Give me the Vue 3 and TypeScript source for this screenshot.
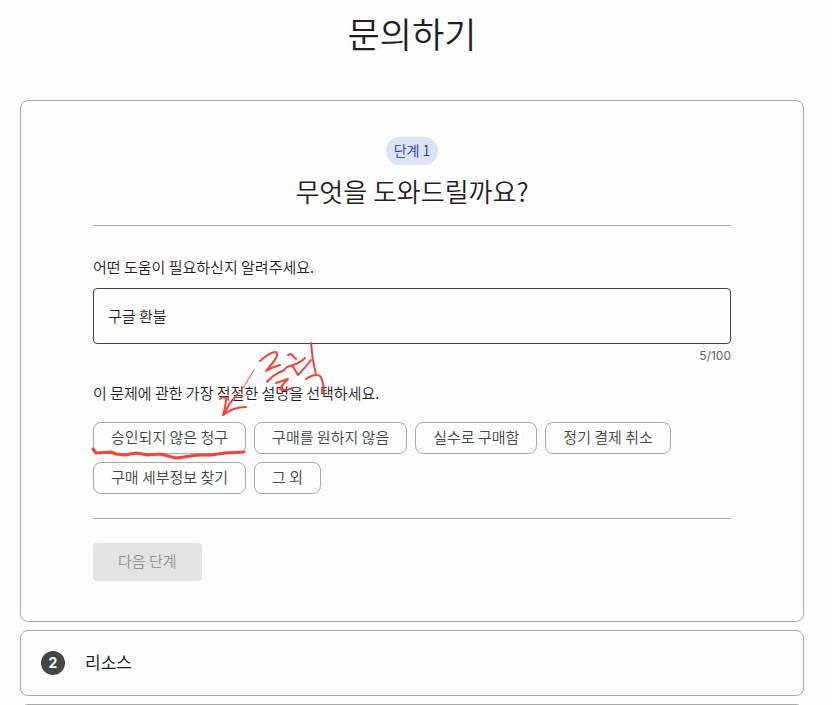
<script setup lang="ts">
import { computed, ref } from 'vue'

const query = ref('구글 환불')
const maxLength = 100
const counter = computed(() => `${query.value.length}/${maxLength}`)

const reasons: string[] = [
  '승인되지 않은 청구',
  '구매를 원하지 않음',
  '실수로 구매함',
  '정기 결제 취소',
  '구매 세부정보 찾기',
  '그 외',
]
const selected = ref<string | null>(null)
</script>

<template>
  <main class="page">
    <h1 class="title">문의하기</h1>

    <div class="steps">
      <section class="card step-open">
        <header class="step-header">
          <span class="badge">단계 1</span>
          <h2 class="step-title">무엇을 도와드릴까요?</h2>
        </header>

        <form class="form" @submit.prevent>
          <label class="label" for="query">어떤 도움이 필요하신지 알려주세요.</label>
          <input id="query" v-model="query" class="field" type="text" :maxlength="maxLength" />
          <p class="counter">{{ counter }}</p>

          <p id="reason-label" class="label reason-label">이 문제에 관한 가장 적절한 설명을 선택하세요.</p>
          <div class="chips" role="group" aria-labelledby="reason-label">
            <button
              v-for="reason in reasons"
              :key="reason"
              class="chip"
              type="button"
              :aria-pressed="selected === reason"
              @click="selected = reason"
            >
              {{ reason }}
            </button>
          </div>

          <div class="actions">
            <button class="next" type="submit" :disabled="selected === null">다음 단계</button>
          </div>
        </form>

        <svg class="ink" viewBox="0 0 250 130" width="250" height="130" aria-hidden="true">
          <path class="thin" d="M164 29 L153 47 L140 62" />
          <path d="M147 54 L140 62 L134 73" />
          <path d="M130 58 Q133 55 136 57 Q136 64 133 74 Q143 66 156 66" />
          <path d="M170 20 Q180 11 186 11 Q190 14 180 25 L176 30 Q182 26 190 24" />
          <path d="M177 41 Q185 32 193 30 L196 27" />
          <path d="M186 42 L198 38 Q192 44 190 48 Q194 51 202 47" />
          <path d="M198 14 L201 13 L206 18 M197 26 Q209 23 215 17 M202 24 L208 34 Q214 28 221 19" />
          <path d="M221 2 Q222 18 226 34 M216 38 Q225 32 230 35 Q234 40 234 54" />
          <path class="thick" d="M3 108 L6 112 L21 111 L26 113 L35 114 L46 112 L58 114 L70 113 L86 117 L108 114 L121 114 L135 112 L154 111" />
        </svg>
      </section>

      <section class="card step-closed">
        <span class="number">2</span>
        <h2 class="closed-title">리소스</h2>
      </section>

      <section class="card step-closed"></section>
    </div>
  </main>
</template>

<style>
body {
  margin: 0;
  background: #fdfdfd;
}
</style>

<style scoped>
.page {
  box-sizing: border-box;
  height: 100vh;
  overflow: hidden;
  padding: 8px 28px 0 20px;
  color: #1f1f1f;
  font-family: 'Noto Sans CJK KR', sans-serif;
  font-size: 15px;
  font-weight: 350;
  line-height: 24px;
}

.title {
  margin: 0 0 42px;
  font-size: 35px;
  font-weight: 350;
  line-height: 50px;
  text-align: center;
}

.steps {
  display: flex;
  flex-direction: column;
  gap: 8px;
}

.card {
  box-sizing: border-box;
  border: 1px solid #a9a9a9;
  border-radius: 8px;
}

.step-open {
  position: relative;
  padding: 36px 72px 40px;
}

.step-header {
  display: flex;
  flex-direction: column;
  align-items: center;
  padding-bottom: 16px;
  border-bottom: 1px solid #a9a9a9;
}

.badge {
  padding: 0 8px 2px;
  border-radius: 14px;
  background: #dbe3f6;
  color: #1f3f94;
  font-size: 14px;
  line-height: 26px;
}

.step-title {
  margin: 8px 0 0;
  font-size: 26px;
  font-weight: 350;
  line-height: 36px;
}

.form {
  display: flex;
  flex-direction: column;
  padding-top: 29px;
}

.label {
  margin: 0 0 9px;
  font-size: 15px;
  line-height: 24px;
}

.field {
  box-sizing: border-box;
  width: 100%;
  height: 56px;
  padding: 0 14px 2px;
  border: 1px solid #444746;
  border-radius: 4px;
  background: transparent;
  color: inherit;
  font: inherit;
}

.counter {
  margin: 4px 0 0;
  color: #5f6368;
  font-family: Inter, sans-serif;
  font-size: 12px;
  font-weight: 400;
  line-height: 16px;
  text-align: right;
}

.reason-label {
  margin: 17px 0;
}

.chips {
  display: flex;
  flex-wrap: wrap;
  gap: 8px;
}

.chip {
  height: 32px;
  padding: 0 17px 2px;
  border: 1px solid #a9a9a9;
  border-radius: 8px;
  background: transparent;
  color: #444746;
  font: inherit;
  line-height: 28px;
}

.actions {
  margin-top: 24px;
  padding-top: 24px;
  border-top: 1px solid #a9a9a9;
}

.next {
  display: block;
  height: 38px;
  padding: 0 25px 2px;
  border: 0;
  border-radius: 4px;
  background: #e3e3e3;
  color: #444746;
  font: inherit;
}

.next:disabled {
  color: #949494;
}

.step-closed {
  display: flex;
  align-items: center;
  gap: 20px;
  min-height: 66px;
  padding: 0 20px;
}

.number {
  width: 24px;
  border-radius: 12px;
  background: #444746;
  color: #fff;
  font-family: Inter, sans-serif;
  font-size: 14px;
  font-weight: 700;
  line-height: 24px;
  text-align: center;
}

.closed-title {
  margin: 0;
  padding-bottom: 2px;
  font-size: 17px;
  font-weight: 400;
  line-height: 24px;
}

/* Handwritten marks over the form */
.ink {
  position: absolute;
  top: 240px;
  left: 69px;
  fill: none;
  stroke: #f44336;
  stroke-width: 2;
  stroke-linecap: round;
  stroke-linejoin: round;
  pointer-events: none;
}

.thin {
  stroke-width: 1;
}

.thick {
  stroke-width: 3;
}
</style>
